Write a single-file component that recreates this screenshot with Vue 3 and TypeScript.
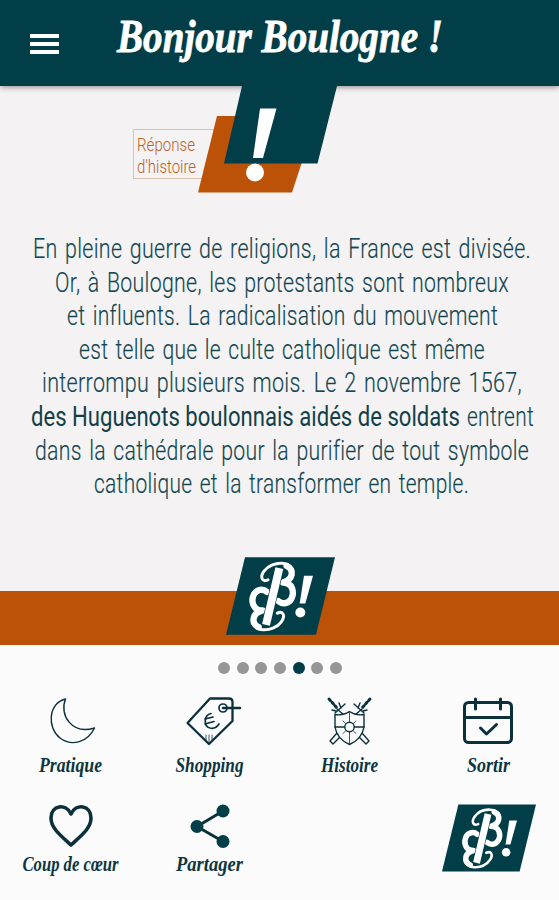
<script setup lang="ts">
interface Run { x: number; width: number; text: string; strong?: boolean }

const lines: Run[][] = [
  [{ x: 33, width: 498, text: 'En pleine guerre de religions, la France est divisée.' }],
  [{ x: 55, width: 454, text: 'Or, à Boulogne, les protestants sont nombreux' }],
  [{ x: 67, width: 431, text: 'et influents. La radicalisation du mouvement' }],
  [{ x: 79, width: 406, text: 'est telle que le culte catholique est même' }],
  [{ x: 42, width: 480, text: 'interrompu plusieurs mois. Le 2 novembre 1567,' }],
  [
    { x: 31, width: 429, text: 'des Huguenots boulonnais aidés de soldats', strong: true },
    { x: 467, width: 67, text: 'entrent' },
  ],
  [{ x: 35, width: 494, text: 'dans la cathédrale pour la purifier de tout symbole' }],
  [{ x: 94, width: 375, text: 'catholique et la transformer en temple.' }],
]

type Icon = 'moon' | 'tag' | 'shield' | 'calendar' | 'heart' | 'share'
interface Item { icon: Icon; label: string; width: number }

const items: Item[] = [
  { icon: 'moon', label: 'Pratique', width: 63 },
  { icon: 'tag', label: 'Shopping', width: 68 },
  { icon: 'shield', label: 'Histoire', width: 57 },
  { icon: 'calendar', label: 'Sortir', width: 43 },
  { icon: 'heart', label: 'Coup de cœur', width: 96 },
  { icon: 'share', label: 'Partager', width: 67 },
]

const dots = [0, 1, 2, 3, 4, 5, 6]
const active = 4
</script>

<template>
  <div class="screen">
    <svg class="defs" width="0" height="0" aria-hidden="true">
      <symbol id="brand" viewBox="0 0 327 233">
        <path class="plate" d="M57 0H327L270 233H0Z" />
        <g id="half" class="swash">
          <path class="thin" d="M126 68C108 76 101 60 114 42C127 24 150 17 168 18C184 19 194 25 200 38" />
          <path class="bowl" d="M182 26C206 38 202 68 170 76C200 76 206 105 196 125C188 139 170 143 157 132" />
        </g>
        <use href="#half" transform="rotate(180 140 118)" />
        <path class="gap" d="M160 34L120 202" />
        <path class="stem" d="M160 33L120 203" />
        <path class="mark" d="M234 56L261 56L238 139L221 139Z" />
        <circle class="mark" cx="223" cy="166" r="15" />
      </symbol>
    </svg>

    <header class="bar">
      <div class="burger"><i></i><i></i><i></i></div>
      <svg class="title" width="400" height="66">
        <text x="2" y="52" textLength="326" lengthAdjust="spacingAndGlyphs">Bonjour Boulogne !</text>
      </svg>
    </header>

    <main class="story">
      <svg class="badge" width="210" height="112" viewBox="130 86 210 112">
        <rect class="frame" x="133.500" y="129.500" width="90" height="49" />
        <text x="137" y="150.500" textLength="58" lengthAdjust="spacingAndGlyphs">Réponse</text>
        <text x="137" y="172.500" textLength="59" lengthAdjust="spacingAndGlyphs">d'histoire</text>
        <path class="rust" d="M217 116H317L292 192.500H198Z" />
        <path class="teal" d="M242 86H337L317.500 163.500H224Z" />
        <path class="white" d="M260 108.500H276.500L263 158H253Z" />
        <circle class="white" cx="255" cy="172.500" r="9" />
      </svg>
      <div class="copy">
        <svg v-for="(line, index) in lines" :key="index" class="line" width="559" height="33.600">
          <text
            v-for="run in line"
            :key="run.text"
            :class="{ strong: run.strong }"
            :x="run.x"
            y="26"
            :textLength="run.width"
            lengthAdjust="spacingAndGlyphs"
          >{{ run.text }}</text>
        </svg>
      </div>
      <div class="band">
        <svg class="band-logo" width="109" height="78"><use href="#brand" /></svg>
      </div>
    </main>

    <div class="dots">
      <i v-for="dot in dots" :key="dot" :class="{ on: dot === active }"></i>
    </div>

    <nav class="menu">
      <a v-for="item in items" :key="item.label" class="item">
        <svg v-if="item.icon === 'moon'" class="icon" viewBox="0 0 60 60">
          <path stroke-width="1.400" d="M25.500 9C8 13 7 38 20 48C32 57 48 52 54.500 38C32 45 19 25 25.500 9Z" />
        </svg>
        <svg v-else-if="item.icon === 'tag'" class="icon" viewBox="0 0 60 60">
          <path stroke-width="2.300" d="M31 8.500H50Q53.500 8.500 53.500 12V31L30 54L8.500 33Z" />
          <circle cx="44" cy="18" r="4" stroke-width="1.700" />
          <path stroke-width="2.500" d="M44 18H61" />
          <path stroke-width="1.700" d="M32 23.500C25 25 24 36 31 38C35 39 38 37 40 34M26 29L34 27M26 34L35 31.500" />
          <path stroke-width=".8" d="M27 45V50M30 45V52M33 45V50" />
        </svg>
        <svg v-else-if="item.icon === 'shield'" class="icon" viewBox="0 0 60 60">
          <g class="swords">
            <path d="M16 23L26 14M13 20L17 21M20 13L22 18M18 19L25 25M18 43L11 51L14 54L22 46" />
            <path class="grip" d="M10 9L18 18" />
            <path d="M45 23L35 14M48 20L44 21M41 13L39 18M43 19L36 25M43 43L50 51L47 54L39 46" />
            <path class="grip" d="M51 9L43 18" />
          </g>
          <path class="solid" stroke-width="1.400" d="M30.500 21.500Q24 26 16 24.500V37Q18 49 30.500 54.500Q43 49 45 37V24.500Q37 26 30.500 21.500Z" />
          <path stroke-width="1.500" d="M16 37H45" />
          <path stroke-width=".8" d="M30.500 22V54M24 31L37 43.500M37 31L24 43.500" />
          <circle class="solid" cx="30.500" cy="37" r="4.700" stroke-width="1.400" />
        </svg>
        <svg v-else-if="item.icon === 'calendar'" class="icon" viewBox="0 0 60 60">
          <rect x="6.500" y="12.500" width="47" height="40" rx="4" stroke-width="3" />
          <path stroke-width="3" d="M6.500 27.500H53.500M17.500 9V19M42.500 9V19M22.500 38L28.500 44L38.500 34.500" />
        </svg>
        <svg v-else-if="item.icon === 'heart'" class="icon" viewBox="0 0 60 60">
          <path stroke-width="3.600" d="M31 50C20 40 11 33 11 23C11 10 26 8 31 19C36 8 51 10 51 23C51 33 42 40 31 50Z" />
        </svg>
        <svg v-else class="icon" viewBox="0 0 60 60">
          <path stroke-width="3" d="M44 16L18 31.500L44 46.500" />
          <g class="node"><circle cx="44" cy="16" r="6.500" /><circle cx="18" cy="31.500" r="6.500" /><circle cx="44" cy="46.500" r="6.500" /></g>
        </svg>
        <svg class="label" width="138" height="28">
          <text :x="69.500 - item.width / 2" y="18" :textLength="item.width" lengthAdjust="spacingAndGlyphs">{{ item.label }}</text>
        </svg>
      </a>
      <svg class="corner" width="94" height="68"><use href="#brand" /></svg>
    </nav>
  </div>
</template>

<style>
body { background: #fbfbfb; }
</style>

<style scoped>
.screen {
  width: 559px;
  height: 900px;
  display: flex;
  flex-direction: column;
  overflow: hidden;
  background: #fbfbfb;
}
.defs { position: absolute; }
.plate { fill: #013e47; }
.swash { fill: none; stroke: #fff; stroke-linecap: round; stroke-linejoin: round; }
.stem { fill: none; stroke: #fff; stroke-width: 24; }
.gap { fill: none; stroke: #013e47; stroke-width: 28; }
.thin { stroke-width: 9; }
.bowl { stroke-width: 19; }
.mark { fill: #fff; }

.bar {
  flex: none;
  height: 86px;
  display: flex;
  background: #013e47;
  box-shadow: 0 1px 6px rgba(0, 0, 0, .45);
  z-index: 1;
}
.burger {
  width: 29px;
  margin: 34px 56px 0 30px;
  display: flex;
  flex-direction: column;
  gap: 4px;
}
.burger i { height: 4px; background: #fff; }
.title { overflow: visible; }
.title text {
  font: italic bold 47px "Liberation Serif", serif;
  fill: #fff;
  stroke: #fff;
  stroke-width: .8px;
}

.story {
  flex: none;
  height: 559px;
  display: flex;
  flex-direction: column;
  background: #f4f2f3;
}
.badge { flex: none; margin-left: 130px; z-index: 2; }
.badge text { font: 300 18px Roboto, sans-serif; fill: #bc5f26; }
.frame { fill: none; stroke: #d8c2ae; }
.rust { fill: #bc5208; }
.teal { fill: #013e47; }
.white { fill: #fff; }
.copy {
  flex: 1;
  padding-top: 34px;
  display: flex;
  flex-direction: column;
}
.line { flex: none; overflow: visible; }
.line text {
  font: 300 27.500px Roboto, sans-serif;
  letter-spacing: .4px;
  word-spacing: 2.500px;
  fill: #124650;
  stroke: #124650;
  stroke-width: .15px;
}
.line .strong {
  font-weight: 400;
  letter-spacing: 0;
  word-spacing: 0;
  fill: #123f48;
  stroke: none;
}
.band {
  flex: none;
  height: 54px;
  display: flex;
  justify-content: center;
  align-items: flex-end;
  background: #bc5208;
}
.band-logo { margin: 0 0 10px 1px; flex: none; }

.dots {
  flex: none;
  height: 45px;
  padding-left: 1px;
  display: flex;
  justify-content: center;
  align-items: center;
  gap: 6.700px;
}
.dots i { width: 12px; height: 12px; border-radius: 50%; background: #969696; }
.dots .on { background: #013e47; }

.menu {
  display: grid;
  grid-template-columns: repeat(4, 139.500px);
  grid-template-rows: 103px 100px;
}
.item {
  display: flex;
  flex-direction: column;
  align-items: center;
}
.icon {
  width: 60px;
  height: 60px;
  overflow: visible;
  fill: none;
  stroke: #0b303b;
  stroke-linecap: round;
  stroke-linejoin: round;
}
.item:nth-child(n + 5) .icon { margin: 2px 0 -6px; }
.swords { stroke-width: 1.400; }
.grip { stroke-width: 3; stroke-dasharray: 2 2.500; }
.solid { fill: #fbfbfb; }
.node { fill: #013e47; stroke: none; }
.label { margin-top: 4px; overflow: visible; }
.label text {
  font: italic bold 20px "Liberation Serif", serif;
  fill: #0c3540;
}
.corner { grid-column: 4; margin: 11px 0 0 23px; }
</style>
